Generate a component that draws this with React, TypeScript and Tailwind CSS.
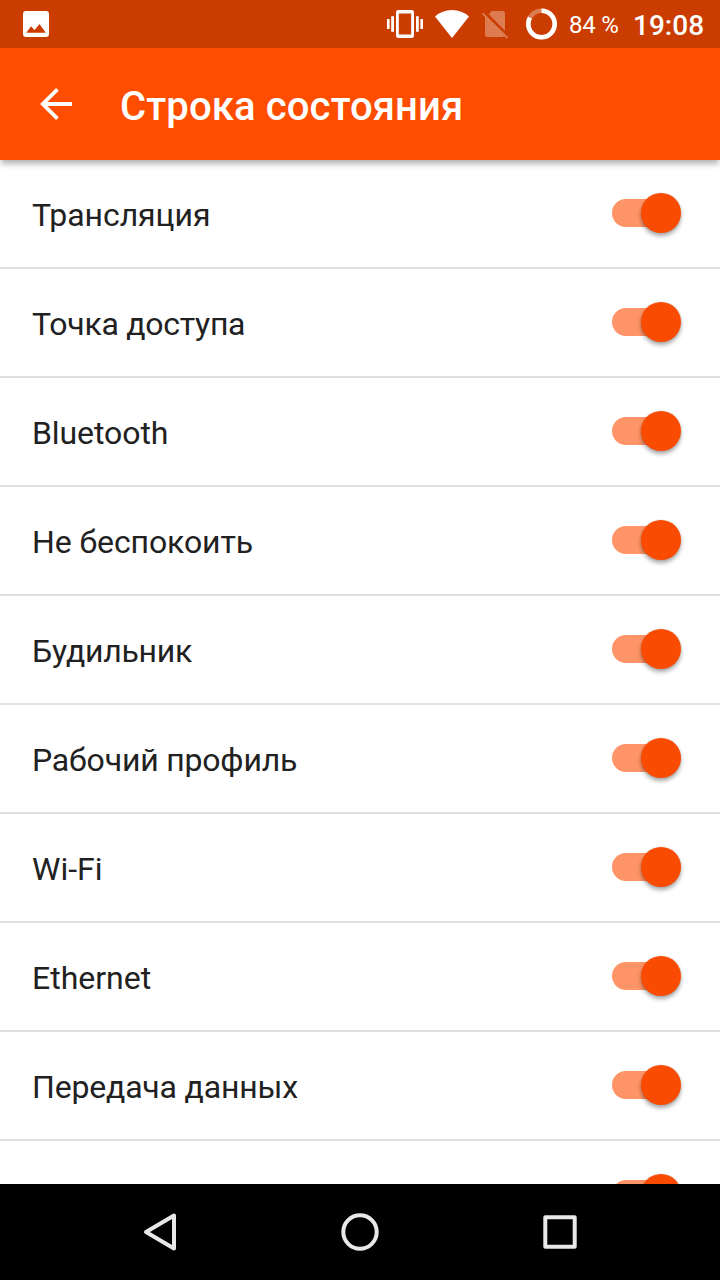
type Item = { label: string; tracking: string };

const items: Item[] = [
  { label: 'Трансляция', tracking: 'tracking-[-0.06px]' },
  { label: 'Точка доступа', tracking: 'tracking-[-0.27px]' },
  { label: 'Bluetooth', tracking: 'tracking-[-0.08px]' },
  { label: 'Не беспокоить', tracking: 'tracking-[-0.1px]' },
  { label: 'Будильник', tracking: 'tracking-[-0.25px]' },
  { label: 'Рабочий профиль', tracking: 'tracking-[-0.18px]' },
  { label: 'Wi-Fi', tracking: 'tracking-normal' },
  { label: 'Ethernet', tracking: 'tracking-normal' },
  { label: 'Передача данных', tracking: 'tracking-[-0.18px]' },
  { label: '', tracking: 'tracking-normal' },
];

function Toggle() {
  return (
    <button type="button" role="switch" aria-checked="true" className="flex h-10 w-[69px] items-center rounded-full">
      <span className="h-7 w-[62px] rounded-full bg-[#ff9468]" />
      <span className="-ml-[33px] size-10 shrink-0 rounded-full bg-[#fa4b03] shadow-[0_3px_4px_rgba(0,0,0,0.34),0_0_2px_rgba(0,0,0,0.12)]" />
    </button>
  );
}

function StatusBar() {
  return (
    <div className="flex h-12 shrink-0 items-center bg-[#cb3c00] text-white">
      <svg className="ml-[23px]" width="26" height="26" viewBox="0 0 26 26">
        <path
          fill="#fff"
          fillRule="evenodd"
          d="M3 0H23Q26 0 26 3V23Q26 26 23 26H3Q0 26 0 23V3Q0 0 3 0ZM3.3 21.7H22.8L16.5 13L11.6 19L8 15.2Z"
        />
      </svg>
      <div className="flex-1" />
      <svg width="36" height="28" viewBox="0 0 36 28" fill="#fff">
        <path d="M0 9h2.6v10H0zM4.2 6.2H7v15.6H4.2zM29 6.2h2.8v15.6H29zM33.4 9H36v10h-2.6z" />
        <path
          fillRule="evenodd"
          d="M11.2 0H24.8Q27 0 27 2.2V25.8Q27 28 24.8 28H11.2Q9 28 9 25.8V2.2Q9 0 11.2 0ZM11.8 3.4V24.6H24.2V3.4Z"
        />
      </svg>
      <svg className="ml-3" width="34" height="28" viewBox="0 0 34 28">
        <path fill="#fff" d="M17 28L0 6.6Q7 0 17 0T34 6.6Z" />
      </svg>
      <svg className="ml-3" width="28" height="30" viewBox="0 0 28 30">
        <path fill="#dd7c51" d="M10.8 2H21.5Q24 2 24 4.5V21.7L7.7 5.2ZM4 7.5V25.5Q4 28 6.5 28H21.5Q23 28 23.8 26.8Z" />
        <path stroke="#dd7c51" strokeWidth="2" d="M1.6 4.4L26.4 29" />
      </svg>
      <svg className="ml-[17px]" width="31" height="32" viewBox="0 0 31 32" fill="none" strokeWidth="4.6">
        <circle cx="15.5" cy="16" r="13.2" stroke="#dd7c51" />
        <circle cx="15.5" cy="16" r="13.2" stroke="#fff" pathLength="100" strokeDasharray="83 17" transform="rotate(-90 15.5 16)" />
      </svg>
      <span className="ml-3 w-[49px] whitespace-nowrap pt-0.5 text-[24px] leading-7 tracking-[-0.2px]">84 %</span>
      <span className="ml-[15px] w-[87px] whitespace-nowrap pt-[3px] text-[28px] font-medium leading-8">19:08</span>
    </div>
  );
}

export default function App() {
  return (
    <div className="flex h-[1280px] w-[720px] flex-col overflow-hidden bg-white font-['Roboto',sans-serif]">
      <StatusBar />
      <header className="relative z-10 flex h-28 shrink-0 items-center bg-[#ff4d00] text-white shadow-[0_5px_6px_-1px_rgba(0,0,0,0.3)]">
        <svg className="ml-10" width="32" height="32" viewBox="0 0 32 32" fill="none" stroke="#fff" strokeWidth="3.8">
          <path d="M32 16H4M17.4 1.4L2.8 16L17.4 30.6" />
        </svg>
        <h1 className="ml-12 pt-1.5 text-[40px] font-medium leading-[48px] tracking-[0.14px]">Строка состояния</h1>
      </header>
      <main className="min-h-0 flex-1 overflow-hidden">
        {items.map(({ label, tracking }, i) => (
          <div key={i} className="flex h-[109px] items-center justify-between border-b-2 border-[#dfdfdf] pb-px pl-8 pr-[39px]">
            <span className={`${tracking} pt-[3px] text-[32px] leading-10 text-[#212121]`}>{label}</span>
            <Toggle />
          </div>
        ))}
      </main>
      <nav className="flex h-24 shrink-0 items-center justify-center gap-[160px] bg-black">
        <svg width="40" height="40" viewBox="0 0 40 40" fill="none" stroke="#e8e8e8" strokeWidth="4" strokeLinejoin="round">
          <path d="M34 3.5V36.5L6 20Z" />
        </svg>
        <svg width="40" height="40" viewBox="0 0 40 40" fill="none" stroke="#e8e8e8" strokeWidth="4">
          <circle cx="20" cy="20" r="16.7" />
        </svg>
        <svg width="40" height="40" viewBox="0 0 40 40" fill="none" stroke="#e8e8e8" strokeWidth="4" strokeLinejoin="round">
          <path d="M5.3 5.3H34.7V34.7H5.3Z" />
        </svg>
      </nav>
    </div>
  );
}
